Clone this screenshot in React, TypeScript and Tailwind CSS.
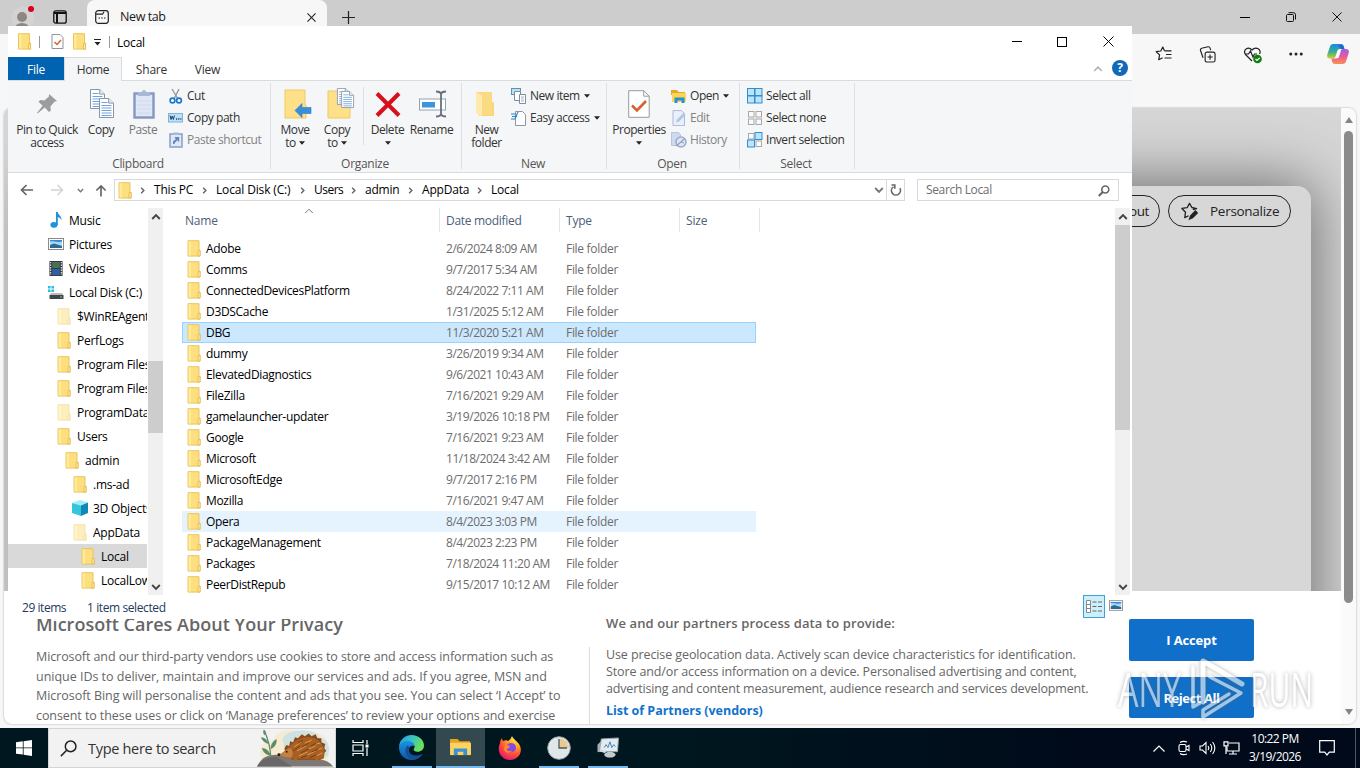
import React from "react";
import { Ellipsis } from "lucide-react";

const Folder = ({ faded = false, className = "w-[14px] h-[17px]" }: { faded?: boolean; className?: string }) => (
  <svg viewBox="0 0 14 17" className={`${className} shrink-0 ${faded ? "opacity-50" : ""}`}>
    <path d="M1 .7h11v9.600h1v5.800H1z" fill="#fddf80" stroke="#e8c14f" strokeWidth=".9" />
    <path d="M11 16.100V10.800l2.100-.6v5.900z" fill="#ffe9a8" stroke="#dfb23e" strokeWidth=".7" />
    <path d="M1.500 1.200h2.500v14.500H1.500z" fill="#ffec9f" opacity=".8" />
  </svg>
);

const Caret = () => (
  <svg viewBox="0 0 6 4" className="inline-block h-[4px] w-[6px] shrink-0"><path d="M0 .3h6L3 3.7z" fill="#222" /></svg>
);

const Chev = ({ d, c = "#555", className = "w-[10px] h-[10px]", sw = 1.6 }: { d: "up" | "down" | "right"; c?: string; className?: string; sw?: number }) => (
  <svg viewBox="0 0 10 10" className={`${className} shrink-0`} fill="none" stroke={c} strokeWidth={sw}>
    <path d={d === "up" ? "M1.2 7 5 3.2 8.8 7" : d === "down" ? "M1.2 3 5 6.8 8.8 3" : "M3.5 2 6.5 5 3.5 8"} />
  </svg>
);

const PageLines = ({ x, y }: { x: number; y: number }) => (
  <g transform={`translate(${x} ${y})`}>
    <path d="M.5.5h9.2l4.8 4.6v14.4H.5z" fill="#fff" stroke="#8795a8" />
    <path d="M9.7.5v4.6h4.8" fill="#e9eef5" stroke="#8795a8" />
    <path d="M2.5 4.5h6M2.5 7.5h10M2.5 10h10M2.5 12.5h10M2.5 15h10M2.5 17.5h10" stroke="#6ea3e0" />
  </g>
);

const Big = ({ icon, a, b, w, caret = false, dim = false }: { icon: React.ReactNode; a: string; b?: string; w: string; caret?: boolean; dim?: boolean }) => (
  <div className={`flex ${w} shrink-0 flex-col items-center`}>
    <div className="mt-[7px] flex h-[32px] items-center justify-center">{icon}</div>
    <div className={`mt-[3px] whitespace-nowrap text-center leading-[13px] ${dim ? "text-[#777]" : "text-[#333]"}`}>
      <div>{a}</div>
      <div className="flex items-center justify-center gap-[3px] leading-[13px]">
        {b && <span>{b}</span>}
        {caret && <span className="flex h-[13px] items-center"><Caret /></span>}
      </div>
    </div>
  </div>
);

const Small = ({ icon, t, caret = false, dim = false }: { icon: React.ReactNode; t: string; caret?: boolean; dim?: boolean }) => (
  <div className={`flex h-[22px] items-center whitespace-nowrap ${dim ? "text-[#838383]" : "text-[#333]"}`}>
    <span className="mr-[3px] flex w-[16px] shrink-0 justify-center">{icon}</span>
    <span>{t}</span>
    {caret && <span className="ml-[4px] flex"><Caret /></span>}
  </div>
);

const Group = ({ w, label, children }: { w: string; label: string; children: React.ReactNode }) => (
  <div className={`flex ${w} shrink-0 flex-col`}>
    <div className="flex h-[74px]">{children}</div>
    <div className="pr-[2px] text-center leading-[17px] tracking-[-0.3px] text-[#555]">{label}</div>
  </div>
);

const Sep = () => <div className="mt-[2px] h-[86px] w-px shrink-0 bg-[#dcdfe3]" />;

const Sq = ({ x, y, on }: { x: number; y: number; on: boolean }) => (
  <rect x={x} y={y} width={on ? 7 : 5.5} height={on ? 7 : 5.5} fill={on ? "#bfe3fb" : "#fafafa"} stroke={on ? "#2f8fd0" : "#a8a8a8"} />
);

function Ribbon() {
  return (
    <div className="flex h-[93px] border-t border-b border-[#dadbdc] bg-[#f5f6f7] tracking-[-0.45px]">
      <Group w="w-[262px]" label="Clipboard">
        <Big w="w-[78px]" a="Pin to Quick" b="access" icon={
          <svg viewBox="0 0 24 24" className="h-[24px] w-[24px]"><path d="M14 2l8 7-2.6.8-4 4.6.4 4-1.8 1.6-4.2-4.4L2.5 21.5 2 21l5.6-7.2L3.500 9.700l1.800-1.600 4.200.300 4.400-4z" fill="#9a9da0" /></svg>} />
        <Big w="w-[30px]" a="Copy" icon={<svg viewBox="0 0 26 30" className="ml-[2px] h-[30px] w-[26px]"><PageLines x={1} y={0} /><PageLines x={10} y={9} /></svg>} />
        <Big w="w-[54px]" a="Paste" dim icon={
          <svg viewBox="0 0 22 30" className="ml-[2px] h-[30px] w-[22px]"><rect x="1.500" y="4.500" width="19" height="24" fill="#dfe7f4" stroke="#8298c0" strokeWidth="2.400" /><path d="M5 3h4a2 2 0 0 1 4 0h4v4H5z" fill="#a9b8d3" /><path d="M4 12h14M4 16h14M4 20h14M4 24h14" stroke="#cbd8ee" /></svg>} />
        <div className="-ml-[2px] flex flex-col pt-[4px]">
          <Small t="Cut" icon={<svg viewBox="0 0 14 16" className="h-[16px] w-[14px]" fill="none"><path d="M3 1l6 10M10 1L5 11" stroke="#8d99a6" strokeWidth="1.400" /><circle cx="3.500" cy="12.500" r="2.400" stroke="#1979c9" strokeWidth="1.600" /><circle cx="10" cy="12.500" r="2.400" stroke="#1979c9" strokeWidth="1.600" /></svg>} />
          <Small t="Copy path" icon={<svg viewBox="0 0 16 10" className="h-[10px] w-[16px]"><rect x=".5" y=".5" width="14" height="8.500" fill="#bfdff7" stroke="#7db4dc" /><path d="M2 2.500l1 4 1.200-3.500L5.400 6.500l1-4" fill="none" stroke="#17456e" /><path d="M8 6h1.200M10.200 6h1.200M12.400 6h1" stroke="#17456e" strokeWidth="1.400" /></svg>} />
          <Small dim t="Paste shortcut" icon={<svg viewBox="0 0 14 16" className="h-[16px] w-[14px]"><rect x="1" y="2" width="12" height="13" fill="#dfe8f6" stroke="#8ea3c7" strokeWidth="1.600" /><path d="M4 .5h6v2.500H4z" fill="#a8b8d6" /><path d="M4 12V9.500l3.500-3H5.800V5h4.400v4.400H8.800V7.800L5.600 11v1z" fill="#5f83bd" /></svg>} />
        </div>
      </Group>
      <Sep />
      <Group w="w-[190px]" label="Organize">
        <Big w="w-[48px]" a="Move" b="to" caret icon={
          <svg viewBox="0 0 28 30" className="ml-[6px] h-[30px] w-[28px]"><path d="M1 1h20v15h1v13H1z" fill="#ffe08a" stroke="#eec961" /><path d="M11 21.500l7-7v4h9v6h-9v4z" fill="#3a8fd9" stroke="#2b78bf" strokeWidth=".6" /></svg>} />
        <Big w="w-[36px]" a="Copy" b="to" caret icon={
          <svg viewBox="0 0 28 32" className="ml-[8px] h-[32px] w-[28px]"><path d="M1 3h20v14h2v13H1z" fill="#ffe08a" stroke="#eec961" /><g transform="translate(10 0) scale(.85)"><PageLines x={0} y={0} /><PageLines x={5} y={3.500} /></g></svg>} />
        <div className="ml-[8px] mt-[6px] h-[58px] w-px bg-[#dcdfe3]" />
        <Big w="w-[47px]" a="Delete" caret icon={
          <svg viewBox="0 0 26 26" className="h-[26px] w-[26px]"><path d="M2 2.500L24 24.500M24 2.500L2 24.500" stroke="#d8101c" strokeWidth="4" /></svg>} />
        <Big w="w-[41px]" a="Rename" icon={
          <svg viewBox="0 0 28 28" className="ml-[3px] h-[28px] w-[28px]" fill="none"><rect x=".5" y="9" width="26" height="11" fill="#fff" stroke="#8da2b8" /><rect x="3" y="12" width="13" height="5.500" fill="#3f93dc" /><path d="M22 2v24M17 1.500q4 0 5 2 1-2 5-2M17 26.500q4 0 5-2 1 2 5 2" stroke="#66717d" strokeWidth="1.800" /></svg>} />
      </Group>
      <Sep />
      <Group w="w-[144px]" label="New">
        <Big w="w-[49px]" a="New" b="folder" icon={
          <svg viewBox="0 0 20 26" className="mr-[4px] h-[26px] w-[20px]"><path d="M1 1h16v10h2v14H4z" fill="#f9d679" /><path d="M1 1l6 3v21.500L1 22z" fill="#ffe9ac" /><path d="M1 1h9l7 1v22H7V4z" fill="#fadb83" /></svg>} />
        <div className="flex flex-col pt-[4px]">
          <Small caret t="New item" icon={<svg viewBox="0 0 16 16" className="h-[16px] w-[16px]"><rect x=".5" y=".5" width="9" height="6" fill="#bfe0f3" stroke="#5b93b6" /><path d="M3.500 3.500h6v9h-6z" fill="#fff" stroke="#7f8e9c" /><path d="M8.500 6.500h6v9h-6z" fill="#fff" stroke="#7f8e9c" /><path d="M10 9h3M10 11h3M10 13h3" stroke="#9fb6cc" /></svg>} />
          <Small caret t="Easy access" icon={<svg viewBox="0 0 16 16" className="h-[16px] w-[16px]" fill="none"><path d="M4.500 1.500h7l3 3v11h-10z" fill="#fff" stroke="#8d98a3" /><path d="M0 4h5M1 6.500h5M4 9L7 2M0 9h4" stroke="#2a83c9" strokeWidth="1.100" /></svg>} />
        </div>
      </Group>
      <Sep />
      <Group w="w-[132px]" label="Open">
        <Big w="w-[64px]" a="Properties" caret icon={
          <svg viewBox="0 0 22 28" className="h-[28px] w-[22px]"><path d="M.7.7h15l5.500 5.500v21.100H.7z" fill="#fff" stroke="#9a9a9a" /><path d="M15.700.7v5.500h5.500" fill="none" stroke="#9a9a9a" /><path d="M4 15.500l5 5 9-9.500" fill="none" stroke="#d8602b" strokeWidth="2.600" /></svg>} />
        <div className="flex flex-col pt-[4px]">
          <Small caret t="Open" icon={<svg viewBox="0 0 16 14" className="h-[14px] w-[16px]"><path d="M0 1h6l1.500 2H14v3H0z" fill="#e9a820" /><path d="M1 4h14v9H1z" fill="#fbd45d" /><path d="M3.500 14V8.500h10V14h-3v-2.500h-4V14z" fill="#2b90d0" /></svg>} />
          <Small dim t="Edit" icon={<svg viewBox="0 0 14 16" className="h-[16px] w-[14px]"><path d="M1 .6h8.500l3 3v12H1z" fill="#eaf0fa" stroke="#a9b9d8" /><path d="M4 12.500l1-3 6.500-6.500 2 2L7 11.500z" fill="#b3c3e2" /></svg>} />
          <Small dim t="History" icon={<svg viewBox="0 0 16 16" className="h-[16px] w-[16px]"><path d="M.5.5h7l2 2v11h-9z" fill="#cfdaee" stroke="#b5c4df" /><circle cx="10" cy="10" r="5" fill="#dfe6f2" stroke="#9aabc9" strokeWidth="1.500" /><path d="M5 14l5-4 3-3M10 10l3 1" stroke="#8fa2c4" strokeWidth="1.300" fill="none" /></svg>} />
        </div>
      </Group>
      <Sep />
      <Group w="w-[114px]" label="Select">
        <div className="flex flex-col pl-[7px] pt-[4px]">
          <Small t="Select all" icon={<svg viewBox="0 0 16 16" className="h-[16px] w-[16px]"><Sq x={0.5} y={0.5} on /><Sq x={8} y={0.5} on /><Sq x={0.5} y={8} on /><Sq x={8} y={8} on /></svg>} />
          <Small t="Select none" icon={<svg viewBox="0 0 16 16" className="h-[16px] w-[16px]"><Sq x={1.500} y={1.500} on={false} /><Sq x={9} y={1.500} on={false} /><Sq x={1.500} y={9} on={false} /><Sq x={9} y={9} on={false} /></svg>} />
          <Small t="Invert selection" icon={<svg viewBox="0 0 16 16" className="h-[16px] w-[16px]"><Sq x={1.500} y={1.500} on={false} /><Sq x={8} y={0.5} on /><Sq x={0.5} y={8} on /><Sq x={9} y={9} on={false} /></svg>} />
        </div>
      </Group>
      <Sep />
    </div>
  );
}

const Crumb = ({ t, w }: { t: string; w: string }) => (
  <>
    <span className="flex w-[23px] shrink-0 items-center justify-center"><Chev d="right" c="#666" className="h-[9px] w-[9px]" /></span>
    <span className={`${w} shrink-0 whitespace-nowrap`}>{t}</span>
  </>
);

function AddressBar() {
  return (
    <div className="flex h-[34px] items-center">
      <div className="ml-[12px] flex w-[94px] items-center text-[#666]">
        <svg viewBox="0 0 14 12" className="h-[12px] w-[14px]" fill="none" stroke="#666" strokeWidth="1.700"><path d="M13 6H1.500M6.500 1l-5 5 5 5" /></svg>
        <svg viewBox="0 0 14 12" className="ml-[16px] h-[12px] w-[14px]" fill="none" stroke="#d4d4d4" strokeWidth="1.500"><path d="M1 6h11.500M7.500 1l5 5-5 5" /></svg>
        <span className="ml-[13px] flex"><Chev d="down" c="#777" className="h-[7px] w-[7px]" sw={2} /></span>
        <svg viewBox="0 0 12 14" className="ml-[11px] h-[13px] w-[12px]" fill="none" stroke="#666" strokeWidth="1.800"><path d="M6 13.500V2M1 7l5-5 5 5" /></svg>
      </div>
      <div className="flex h-[22px] w-[791px] items-center border border-[#d9d9d9] text-black">
        <Folder className="-mr-[1px] ml-[3px] h-[17px] w-[14px]" />
        <Crumb t="This PC" w="w-[39px]" />
        <Crumb t="Local Disk (C:)" w="w-[75px] tracking-[-0.15px]" />
        <Crumb t="Users" w="w-[28px] tracking-[-0.5px]" />
        <Crumb t="admin" w="w-[34px]" />
        <Crumb t="AppData" w="w-[46px]" />
        <Crumb t="Local" w="w-[30px]" />
        <span className="ml-auto mr-[2px] flex"><Chev d="down" c="#777" className="h-[10px] w-[10px]" sw={1.900} /></span>
        <span className="flex h-[20px] w-[18px] items-center justify-center border-l border-[#d9d9d9]">
          <svg viewBox="0 0 12 12" className="h-[12px] w-[12px]" fill="none" stroke="#666" strokeWidth="1.600"><path d="M9.800 4.200A4.500 4.500 0 1 1 3.400 2.800M1.500 1h3.300v3.800" /></svg>
        </span>
      </div>
      <div className="ml-[12px] flex h-[22px] w-[202px] items-center justify-between border border-[#d9d9d9] pl-[8px] pr-[8px] text-[#6d6d6d]">
        <span className="tracking-[-0.35px]">Search Local</span>
        <svg viewBox="0 0 12 12" className="mt-px h-[12px] w-[12px]" fill="none" stroke="#666" strokeWidth="1.600"><circle cx="7.300" cy="4.500" r="3.500" /><path d="M4.800 7L.8 11" strokeWidth="2" /></svg>
      </div>
    </div>
  );
}

const MusicIcon = () => <svg viewBox="0 0 12 16" className="h-[16px] w-[16px]"><ellipse cx="4" cy="12.800" rx="3.600" ry="2.900" fill="#1f92dc" /><path d="M6 0h1.800c.2 3 4.200 4 3.700 8.500-.5-2-2-3-3.700-3.300V13H6z" fill="#1f92dc" /></svg>;
const PicIcon = ({ className = "h-[12px] w-[16px]" }: { className?: string }) => <svg viewBox="0 0 16 12" className={className}><rect x=".5" y=".5" width="15" height="11" fill="#fff" stroke="#8a8a8a" /><rect x="2" y="2" width="12" height="8" fill="#a5d8f5" /><path d="M2 7l4-1.500 8 2.500v2H2z" fill="#2f6b90" /><path d="M2 3.500c4-1 5 1.500 12 0V2H2z" fill="#3b86d6" /></svg>;
const VidIcon = () => <svg viewBox="0 0 14 16" className="h-[15px] w-[14px]"><rect width="14" height="16" fill="#333b42" /><rect x="3" y="1" width="8" height="6.500" fill="#4a7050" /><rect x="3" y="8.500" width="8" height="6.500" fill="#2f5fa8" /><path d="M1.300 1v14M12.700 1v14" stroke="#e6e6e6" strokeWidth="1.200" strokeDasharray="1.500 1.200" /></svg>;
const DiskIcon = () => <svg viewBox="0 0 16 13" className="h-[13px] w-[16px]"><path d="M0 0h2.600v2.600H0zM3.400 0H6v2.600H3.400zM0 3.400h2.600V6H0zM3.400 3.400H6V6H3.400z" fill="#2cbde3" /><path d="M3 7h11l1.500 2.500h-14z" fill="#b8bcc0" /><rect x="1.500" y="9" width="14" height="4" rx=".6" fill="#3f464c" /><rect x="12" y="10.500" width="2" height="1" fill="#6fd66f" /></svg>;
const CubeIcon = () => <svg viewBox="0 0 16 16" className="h-[16px] w-[16px]"><path d="M0 3l8-3 8 2.500-7 3z" fill="#9ff0f6" /><path d="M0 3l9 2.500V16l-9-3z" fill="#35c6dd" /><path d="M9 5.500l7-3v10.500L9 16z" fill="#0f87b8" /></svg>;

type Nav = [string, string, React.ReactNode, boolean?];
const nav: Nav[] = [
  ["pl-[40px]", "Music", <MusicIcon />],
  ["pl-[40px]", "Pictures", <PicIcon />],
  ["pl-[40px]", "Videos", <VidIcon />],
  ["pl-[40px]", "Local Disk (C:)", <DiskIcon />],
  ["pl-[48px]", "$WinREAgent", <Folder faded />],
  ["pl-[48px]", "PerfLogs", <Folder />],
  ["pl-[48px]", "Program Files", <Folder />],
  ["pl-[48px]", "Program Files", <Folder />],
  ["pl-[48px]", "ProgramData", <Folder faded />],
  ["pl-[48px]", "Users", <Folder />],
  ["pl-[56px]", "admin", <Folder />],
  ["pl-[64px]", ".ms-ad", <Folder />],
  ["pl-[64px]", "3D Objects", <CubeIcon />],
  ["pl-[64px]", "AppData", <Folder faded />],
  ["pl-[72px]", "Local", <Folder />, true],
  ["pl-[72px]", "LocalLow", <Folder />],
];

const files: [string, string][] = [
  ["Adobe", "2/6/2024 8:09 AM"],
  ["Comms", "9/7/2017 5:34 AM"],
  ["ConnectedDevicesPlatform", "8/24/2022 7:11 AM"],
  ["D3DSCache", "1/31/2025 5:12 AM"],
  ["DBG", "11/3/2020 5:21 AM"],
  ["dummy", "3/26/2019 9:34 AM"],
  ["ElevatedDiagnostics", "9/6/2021 10:43 AM"],
  ["FileZilla", "7/16/2021 9:29 AM"],
  ["gamelauncher-updater", "3/19/2026 10:18 PM"],
  ["Google", "7/16/2021 9:23 AM"],
  ["Microsoft", "11/18/2024 3:42 AM"],
  ["MicrosoftEdge", "9/7/2017 2:16 PM"],
  ["Mozilla", "7/16/2021 9:47 AM"],
  ["Opera", "8/4/2023 3:03 PM"],
  ["PackageManagement", "8/4/2023 2:23 PM"],
  ["Packages", "7/18/2024 11:20 AM"],
  ["PeerDistRepub", "9/15/2017 10:12 AM"],
];

function Explorer() {
  return (
    <div className="absolute left-[8px] top-[26px] flex h-[593px] w-[1124px] flex-col bg-white text-[12px] tracking-[-0.2px]">
      <div className="flex h-[31px] items-center">
        <Folder className="ml-[9px] h-[17px] w-[15px]" />
        <div className="ml-[7px] h-[12px] w-px bg-[#999]" />
        <svg viewBox="0 0 12 15" className="ml-[11px] h-[15px] w-[13px]" fill="none"><path d="M.5.500h8l3 3v11H.5z" fill="#fff" stroke="#8d949b" /><path d="M3 8l2.500 2.500L9.500 6" stroke="#d8602b" strokeWidth="1.500" /></svg>
        <Folder className="ml-[8px] h-[17px] w-[15px]" />
        <svg viewBox="0 0 7 7" className="ml-[7px] mt-[2px] h-[7px] w-[7px]"><path d="M0 .5h7" stroke="#222" /><path d="M.5 3h6L3.500 6.500z" fill="#222" /></svg>
        <div className="ml-[8px] h-[12px] w-px bg-[#999]" />
        <span className="ml-[7px] pt-[2px] text-black">Local</span>
        <div className="ml-auto flex items-center pr-[18px]">
          <div className="h-px w-[10px] bg-black" />
          <div className="ml-[35px] h-[10px] w-[10px] border border-black" />
          <svg viewBox="0 0 11 11" className="-mt-px ml-[36px] h-[11px] w-[11px]" stroke="#000"><path d="M.5.5l10 10M10.500.5l-10 10" /></svg>
        </div>
      </div>
      <div className="flex h-[23px] items-stretch leading-[25px] text-[#333]">
        <div className="w-[56px] bg-[#0063b1] text-center text-white">File</div>
        <div className="z-10 -mb-px w-[58px] border-x border-t border-[#dadbdc] bg-[#f5f6f7] text-center leading-[23px] tracking-[-0.4px]">Home</div>
        <div className="w-[59px] text-center">Share</div>
        <div className="w-[53px] text-center">View</div>
        <div className="ml-auto flex items-center pr-[4px]">
          <Chev d="up" c="#b0b0b0" />
          <span className="-mt-px ml-[9px] h-[16px] w-[16px] rounded-full bg-[#0f69b8] text-center text-[12px] font-bold leading-[16px] text-white">?</span>
        </div>
      </div>
      <Ribbon />
      <AddressBar />
      <div className="flex h-[388px] overflow-hidden pt-px">
        <div className="w-[139px] shrink-0 overflow-hidden">
          {nav.map(([pad, t, icon, sel], i) => (
            <div key={i} className={`flex h-[24px] items-center gap-[5px] whitespace-nowrap text-black ${pad} ${sel ? "bg-[#d9d9d9]" : ""}`}>
              <span className="flex w-[16px] shrink-0 justify-center">{icon}</span>
              <span className="pt-px tracking-[-0.25px]">{t}</span>
            </div>
          ))}
        </div>
        <div className="ml-px flex w-[15px] shrink-0 flex-col items-center bg-[#f0f0f0] pt-[4px] pb-[3px]">
          <Chev d="up" c="#444" sw={1.900} />
          <div className="mt-[139px] h-[72px] w-full bg-[#cdcdcd]" />
          <span className="mt-auto flex"><Chev d="down" c="#444" sw={1.900} /></span>
        </div>
        <div className="ml-[20px] flex w-[920px] flex-col">
          <div className="flex h-[26px] items-center text-[#4c607a]">
            <div className="relative flex h-full w-[257px] items-center border-r border-[#e5e5e5] pl-[2px] pt-px">
              <span>Name</span>
              <span className="absolute left-[121px] top-[-2px]"><Chev d="up" c="#777" sw={1} /></span>
            </div>
            <div className="flex h-full w-[120px] items-center border-r border-[#e5e5e5] pl-[6px] pt-px tracking-[-0.3px]">Date modified</div>
            <div className="flex h-full w-[120px] items-center border-r border-[#e5e5e5] pl-[6px] pt-px">Type</div>
            <div className="flex h-full w-[80px] items-center border-r border-[#e5e5e5] pl-[6px] pt-px">Size</div>
          </div>
          <div className="-ml-px mt-[6px]">
            {files.map(([n, d]) => (
              <div key={n} className={`flex h-[21px] w-[574px] shrink-0 items-center whitespace-nowrap ${n === "DBG" ? "bg-[#cce8ff] outline outline-1 -outline-offset-1 outline-[#99d1ff]" : n === "Opera" ? "bg-[#e5f3ff]" : ""}`}>
                <span className="ml-[5px] flex w-[19px]"><Folder /></span>
                <span className="w-[240px] tracking-[-0.32px] text-black">{n}</span>
                <span className="w-[120px] tracking-[-0.45px] text-[#6d6d6d]">{d}</span>
                <span className="tracking-[-0.3px] text-[#6d6d6d]">File folder</span>
              </div>
            ))}
          </div>
        </div>
        <div className="ml-auto mr-[2px] flex w-[15px] shrink-0 flex-col items-center bg-[#f0f0f0] pt-[4px] pb-[3px]">
          <Chev d="up" c="#444" sw={1.900} />
          <div className="mt-[3px] h-[205px] w-full bg-[#cdcdcd]" />
          <span className="mt-auto flex"><Chev d="down" c="#444" sw={1.900} /></span>
        </div>
      </div>
      <div className="flex h-[24px] items-start text-[#1e395b]">
        <span className="ml-[14px] w-[65px] pt-[4px] tracking-[-0.45px]">29 items</span>
        <span className="pt-[4px] tracking-[-0.4px]">1 item selected</span>
        <div className="ml-auto flex h-[23px] w-[22px] items-center justify-center border border-[#3fa3d8] bg-[#cdeefb]">
          <svg viewBox="0 0 16 14" className="h-[14px] w-[16px]" fill="none"><path d="M.5.5h4v12h-4zM.5 4.500h4M.5 8.500h4" stroke="#888" fill="#fff" /><path d="M6.500 2h4M12 2h4M6.500 6.500h4M12 6.500h4M6.500 11h4M12 11h4" stroke="#666" /></svg>
        </div>
        <PicIcon className="ml-[4px] mr-[9px] mt-[5px] h-[11px] w-[14px]" />
      </div>
    </div>
  );
}

function Browser() {
  return (
    <div className="flex h-[728px] w-full flex-col bg-[#f7f7f7]">
      <div className="flex h-[34px] items-center bg-[#cdcdcd]">
        <svg viewBox="0 0 24 28" className="ml-[11px] mt-[6px] h-[28px] w-[24px]"><circle cx="12" cy="12" r="11.500" fill="#d3d3d3" /><circle cx="11" cy="11" r="5" fill="#8c8783" /><path d="M3 24a8 7 0 0 1 16 0z" fill="#8c8783" /><circle cx="20" cy="3" r="3" fill="#d5001c" /></svg>
        <svg viewBox="0 0 14 14" className="ml-[18px] h-[14px] w-[14px]" fill="none" stroke="#111" strokeWidth="1.300"><rect x=".8" y=".8" width="12.400" height="12.400" rx="2" /><path d="M1 3h12M4 3v10" strokeWidth="2" /></svg>
        <div className="ml-[20px] flex h-full w-[240px] items-center rounded-t-[8px] bg-[#f7f7f7] text-[12.5px] text-[#1a1a1a]">
          <svg viewBox="0 0 14 14" className="ml-[8px] h-[14px] w-[14px]" fill="none" stroke="#222" strokeWidth="1.200"><rect x=".7" y=".7" width="12.600" height="12.600" rx="2.500" /><path d="M1 4.200h6.500l1.500-2.500M3.500 8h1.500M6.200 8h1.500M9 8h1.500" /></svg>
          <span className="ml-[11px] tracking-[-0.4px]">New tab</span>
          <svg viewBox="0 0 10 10" className="ml-auto mr-[11px] h-[9px] w-[9px]" stroke="#222" strokeWidth="1.200"><path d="M.5.5l9 9M9.500.5l-9 9" /></svg>
        </div>
        <svg viewBox="0 0 14 14" className="ml-[15px] h-[13px] w-[13px]" stroke="#222" strokeWidth="1.300"><path d="M7 0v14M0 7h14" /></svg>
        <div className="ml-auto flex items-center pr-[18px]">
          <div className="h-px w-[10px] bg-black" />
          <svg viewBox="0 0 10 10" className="ml-[36px] h-[10px] w-[10px]" fill="none" stroke="#111"><rect x=".5" y="2.500" width="7" height="7" rx="1" /><path d="M2.500.7h5a2 2 0 0 1 2 2V7.500" /></svg>
          <svg viewBox="0 0 11 11" className="ml-[36px] h-[10px] w-[10px]" stroke="#000"><path d="M.5.5l10 10M10.500.5l-10 10" /></svg>
        </div>
      </div>
      <div className="flex h-[74px] justify-end pr-[11px] pt-[9px]">
        <svg viewBox="0 0 18 18" className="mr-[26px] mt-[2px] h-[18px] w-[18px]" fill="none" stroke="#222" strokeWidth="1.200"><path d="M9.500 5.800L7.800 2 5.800 6 1.200 6.700l3.400 3.200-.9 4.800 4-2M9.500 5.800h7M11 9.500h5.500M9.500 13h7" strokeLinejoin="round" /></svg>
        <svg viewBox="0 0 18 18" className="mr-[27px] mt-[3px] h-[17px] w-[17px]" fill="none" stroke="#222" strokeWidth="1.200"><rect x="6.500" y="6.500" width="10.500" height="10.500" rx="2" /><path d="M11.700 9v5.500M9 11.700h5.500M4.300 12.500l-2.700-7.700a2 2 0 0 1 1.300-2.400L9.500.8a2 2 0 0 1 2.300 1.400l.5 2.300" /></svg>
        <svg viewBox="0 0 20 18" className="mr-[24px] mt-[3px] h-[18px] w-[20px]" fill="none" stroke="#222" strokeWidth="1.200"><path d="M9 15L2.500 8.500C-.5 4 5 0 9 4c4-4 10-.5 7.500 4" /><path d="M2 8h3.500l2-3 2.500 6 1.500-3H14" /><circle cx="14.500" cy="13" r="4.300" fill="#107c10" stroke="none" /><path d="M12.500 13l1.500 1.500 2.700-2.700" stroke="#fff" /></svg>
        <Ellipsis size={18} strokeWidth={2} className="mr-[22px] mt-[2px] text-[#222]" />
        <svg viewBox="0 0 22 20" className="mt-px h-[20px] w-[22px]">
          <defs>
            <linearGradient id="cpA" x1="0" y1="0" x2="0" y2="1"><stop offset="0" stopColor="#1d86e8" /><stop offset=".55" stopColor="#35b18e" /><stop offset="1" stopColor="#d6cf2c" /></linearGradient>
            <linearGradient id="cpB" x1="0" y1="0" x2="0" y2="1"><stop offset="0" stopColor="#a35bea" /><stop offset=".5" stopColor="#e9599a" /><stop offset="1" stopColor="#fb9150" /></linearGradient>
          </defs>
          <path d="M6 0h8c2 0 2.500 1 3 3l.6 2H13c-2 0-2.500 1-3 3l-1.500 4.500C8 14 7 14.500 5.500 14.500H3c-2.500 0-3.300-1.500-2.700-4L3 2.500C3.500 1 4.500 0 6 0z" fill="url(#cpA)" />
          <path d="M16 20H8c-2 0-2.500-1-3-3l-.6-2.500H9c2 0 2.500-1 3-3L13.500 7c.5-1.500 1.500-2 3-2H19c2.500 0 3.300 1.500 2.700 4L19 17.500c-.5 1.500-1.500 2.500-3 2.500z" fill="url(#cpB)" />
          <path d="M11 1h3c2 0 2.500 1 3 3l.4 1H14z" fill="#2465c9" />
          <path d="M8.500 14L11 6.500h3L11.500 14z" fill="#fff" opacity=".9" />
        </svg>
      </div>
      <div className="mx-[4px] flex h-[616px] overflow-hidden rounded-[8px] bg-white shadow-[0_0_2px_#999]">
        <div className="flex w-[1337px] shrink-0 flex-col">
          <div className="h-[483px] overflow-hidden bg-[#d6d6d6] pt-[78px]">
            <div className="ml-[30px] flex h-[500px] w-[1277px] justify-end gap-[8px] rounded-t-[14px] bg-[#d7d7d7] pr-[20px] pt-[9px] text-[13.5px] text-[#222] shadow-[0_0_60px_4px_#6d6d6d]">
              <div className="flex h-[32px] w-[120px] items-center justify-end rounded-full border border-[#222] pr-[10px] tracking-[-0.4px]">Layout</div>
              <div className="flex h-[32px] w-[123px] items-center rounded-full border border-[#222] pl-[11px] tracking-[-0.28px]">
                <svg viewBox="0 0 20 20" className="h-[19px] w-[19px]" fill="none" stroke="#222" strokeWidth="1.400"><path d="M13.500 8l4-1-5-1.200L10 1.500 7.500 6 2 6.800l3.800 4L5 16.500l4-2" strokeLinejoin="round" /><path d="M10 18l1.200-3.500 5-5 2 2-5 5z" fill="#222" /></svg>
                <span className="ml-[11px]">Personalize</span>
              </div>
            </div>
          </div>
          <div className="flex h-[133px] text-[#666]">
            <div className="ml-[32px] w-[554px] shrink-0 pt-[20px]">
              <div className="whitespace-nowrap text-[18px] font-semibold leading-[26px] tracking-[0.02px]">Microsoft Cares About Your Privacy</div>
              <div className="mt-[10px] h-[80px] whitespace-nowrap border-r border-[#ddd] text-[12.5px] leading-[19.600px]">
                <div className="tracking-[-0.09px]">Microsoft and our third-party vendors use cookies to store and access information such as</div>
                <div className="tracking-[-0.02px]">unique IDs to deliver, maintain and improve our services and ads. If you agree, MSN and</div>
                <div className="tracking-[-0.05px]">Microsoft Bing will personalise the content and ads that you see. You can select ‘I Accept’ to</div>
                <div className="tracking-[-0.08px]">consent to these uses or click on ‘Manage preferences’ to review your options and exercise</div>
              </div>
            </div>
            <div className="ml-[16px] w-[523px] shrink-0 whitespace-nowrap pt-[23px] text-[12.5px] tracking-[-0.1px]">
              <div className="text-[13px] font-semibold leading-[18px] tracking-[0.11px]">We and our partners process data to provide:</div>
              <div className="mt-[14px] leading-[17px]">
                <div>Use precise geolocation data. Actively scan device characteristics for identification.</div>
                <div className="tracking-[-0.13px]">Store and/or access information on a device. Personalised advertising and content,</div>
                <div className="tracking-[-0.16px]">advertising and content measurement, audience research and services development.</div>
              </div>
              <div className="mt-[5px] font-bold leading-[17px] tracking-[-0.03px] text-[#1272cc]">List of Partners (vendors)</div>
            </div>
            <div className="flex w-[125px] flex-col gap-[16px] pt-[28px] text-[13px] font-bold tracking-[-0.15px] text-white">
              <div className="flex h-[42px] items-center justify-center rounded-[2px] bg-[#1070c9] pt-px">I Accept</div>
              <div className="flex h-[41px] items-center justify-center rounded-[2px] bg-[#1070c9] pt-[2px] tracking-[-0.45px]">Reject All</div>
            </div>
          </div>
        </div>
        <div className="flex w-[15px] flex-col items-center bg-[#fafafa] pb-[9px] pt-[9px]">
          <svg viewBox="0 0 8 6" className="h-[6px] w-[8px]"><path d="M0 6h8L4 0z" fill="#858585" /></svg>
          <div className="mt-[8px] h-[472px] w-[9px] rounded-full bg-[#8b8b8b]" />
          <svg viewBox="0 0 8 6" className="mt-auto h-[6px] w-[8px]"><path d="M0 0h8L4 6z" fill="#858585" /></svg>
        </div>
      </div>
    </div>
  );
}

function Watermark() {
  return (
    <svg viewBox="0 0 200 70" className="absolute left-[1116px] top-[654px] h-[70px] w-[200px] opacity-60 drop-shadow-[0_0_2px_rgba(90,90,90,0.8)]" fill="#fff">
      <text x="2" y="53" fontFamily="Open Sans, sans-serif" fontSize="48" textLength="63" lengthAdjust="spacingAndGlyphs">ANY</text>
      <text x="134" y="53" fontFamily="Open Sans, sans-serif" fontSize="48" textLength="63" lengthAdjust="spacingAndGlyphs">RUN</text>
      <path d="M87 48V7L126 30" fill="none" stroke="#fff" strokeWidth="5" strokeLinecap="round" strokeLinejoin="round" />
      <path d="M77 53V13M77 53L84 49M94 23L125 39L87 63V56L113 40" fill="none" stroke="#fff" strokeWidth="3.500" strokeLinecap="round" strokeLinejoin="round" />
    </svg>
  );
}

const Task = ({ children, active = false, line = "w-[40px] bg-[#76b9ed]" }: { children: React.ReactNode; active?: boolean; line?: string }) => (
  <div className={`flex h-[40px] w-[49px] shrink-0 flex-col items-center ${active ? "bg-[#33484f]" : ""}`}>
    <div className="flex h-[38px] items-center justify-center pt-px">{children}</div>
    <div className={`h-[2px] ${line}`} />
  </div>
);

function Taskbar() {
  return (
    <div className="flex h-[40px] w-full items-center bg-linear-to-r from-[#00171f] from-50% to-[#000a1a] to-80% text-white">
      <div className="flex w-[48px] justify-center">
        <svg viewBox="0 0 16 16" className="h-[16px] w-[16px]" fill="#fff"><path d="M0 2.300L6.800 1.300v6.200H0zM7.600 1.200L16 0v7.500H7.600zM0 8.300h6.800v6.300L0 13.700zM7.600 8.300H16V16l-8.400-1.200z" /></svg>
      </div>
      <div className="flex h-[40px] w-[288px] items-center border border-[#d5d5d5] bg-[#f2f2f2] text-[#333]">
        <svg viewBox="0 0 16 16" className="ml-[11px] h-[17px] w-[17px]" fill="none" stroke="#222" strokeWidth="1.400"><circle cx="10" cy="6" r="5" /><path d="M6.300 9.700L.8 15.200" /></svg>
        <span className="ml-[11px] whitespace-nowrap pt-px text-[14.5px] tracking-[-0.3px]">Type here to search</span>
        <svg viewBox="0 0 80 38" className="ml-auto h-[38px] w-[78px]">
          <path d="M8 36C-2 22 4 12 16 12 20-2 40-2 48 6c14-8 26 2 24 14 4 8 0 12-2 16z" fill="#f5ead2" />
          <path d="M26 10C30-2 60-2 64 8c10 2 12 12 8 20H30z" fill="#cfe2e2" />
          <path d="M0 38c6-12 14-12 22-12 12 4 24 4 36 4 8 0 16 2 20 8z" fill="#7d7876" />
          <path d="M0 38c6-10 14-9 20-10l16 10z" fill="#6a6768" />
          <path d="M14 28C14 20 12 12 8 2" fill="none" stroke="#5f8a68" strokeWidth="1.300" strokeLinecap="round" />
          <path d="M14 20c0-5 3-9 6-10 1 4-2 9-6 10zM12 15C8 14 5 11 4 8c4 0 7 3 8 7zM14 27c-5-1-8-4-9-8 4 0 8 3 9 8zM8 6C6 4 6 2 7 0c2 1 2 4 1 6z" fill="#5f8a68" />
          <path d="M28 20l2-4 3 1 1-5 3 1 2-5 3 1 4-4 3 2 4-3 3 3 4-2 2 4 4 0 0 4 4 2-1 4 2 3-3 3 1 4-4 2H36z" fill="#8c4817" />
          <path d="M22 26c6-2 7-6 12-9C40 8 54 5 61 10c8 5 10 13 7 20H36c-4 0-8-2-14-4z" fill="#a85f22" />
          <path d="M22 26c5-1 8-6 12-7 4 4 3 7 1 10-4 0-8-1-13-3z" fill="#c5803f" />
          <circle cx="22.500" cy="26" r="1.500" fill="#222" /><circle cx="30.500" cy="22.800" r="1" fill="#222" />
          <path d="M38 18l7-5M41 22l9-5M43 27l9-4M52 26l8-4M53 20l7-3M49 14l7-3M60 15l5-1M61 27l6-3M62 21l5-2" stroke="#dc9d5c" strokeWidth="1" />
          <path d="M37 22l7-5M45 24l8-4M46 18l7-4M55 17l6-3M56 23l7-3M54 29l7-3M42 14l5-3M45 29l6-2" stroke="#6f3813" strokeWidth=".9" />
          <path d="M38 29v3h3v-3M60 29v3h3v-3" fill="#a8672c" />
        </svg>
      </div>
      <div className="flex w-[51px] shrink-0 justify-center">
        <svg viewBox="0 0 17 16" className="mr-[3px] h-[16px] w-[17px]" fill="none" stroke="#fff" strokeWidth="1.200"><path d="M1 0v2.500h10V0M1 16v-2.500h10V16M1 5h10v6H1zM15 0v4M15 8v8" /><path d="M13.500 4.500h3v3h-3z" fill="#fff" stroke="none" /></svg>
      </div>
      <Task>
        <svg viewBox="0 0 24 24" className="h-[25px] w-[25px]">
          <defs>
            <linearGradient id="eg1" x1="0" y1="0" x2="1" y2=".4"><stop offset="0" stopColor="#1c9de0" /><stop offset=".5" stopColor="#35c1c9" /><stop offset="1" stopColor="#6be05a" /></linearGradient>
            <linearGradient id="eg2" x1="0" y1="0" x2="0" y2="1"><stop offset="0" stopColor="#1b94e4" /><stop offset="1" stopColor="#0f56a8" /></linearGradient>
          </defs>
          <path d="M0 11C1 4 6 0 12 0c7 0 12 5 12 10 0 4-3 6-6 6s-4-1-4-2 1-1.500 1-3c0-2-2-4-5-4-4 0-8 1.500-10 4z" fill="url(#eg1)" />
          <path d="M0 12c.5-4 4-6.500 8-6.500 4 0 7 2.500 7 5.500-1-1-3-1-4.500.5C8 14 10 20 16 20c3 0 5-1 6.500-2-2 4-6 6-10.500 6C5 24 0 18.500 0 12z" fill="url(#eg2)" />
          <path d="M8 10c-3 3-3 11 6 13.900 4-.3 7-3 8.500-5.900-2 1.300-4 2-6.500 2-6 0-8.500-6-5.500-8.500z" fill="#124f96" />
        </svg>
      </Task>
      <Task active line="w-[49px] bg-[#76b9ed]">
        <svg viewBox="0 0 24 20" className="h-[19px] w-[23px]"><path d="M1 1h8l2 2.500h11V8H1z" fill="#e9a21c" /><path d="M1 5h22v13H1z" fill="#fdd463" /><path d="M5 18v-7h14v7h-4v-3.500H9V18z" fill="#3a92d6" /></svg>
      </Task>
      <Task line="w-[40px]">
        <svg viewBox="0 0 24 24" className="h-[24px] w-[24px]">
          <defs>
            <radialGradient id="ff1" cx=".75" cy=".1" r="1"><stop offset="0" stopColor="#fff04e" /><stop offset=".35" stopColor="#ffa51f" /><stop offset=".7" stopColor="#ff4a3b" /><stop offset="1" stopColor="#e2127b" /></radialGradient>
          </defs>
          <path d="M2 7c0-2 1-4 2-5 0 1.500.5 2.500 1.500 3L8 4l2 1c2-1 3-3 4-5 1 3 5 5 7 8 5 8-1 16-9 16S-2 16 2 7z" fill="url(#ff1)" />
          <path d="M8 10c2-2 3-3 5-3 4 0 5 3 5 5 0 3-3 4.500-5.500 4.500C9 16.500 7 13 8 10z" fill="#8a48e0" />
          <path d="M7 9.500c2-.5 4 0 5 1-1 2-3 1.500-3.500 3 1 2 4 2 5.500 1-1 3-7 3-8-1z" fill="#ff8a24" />
        </svg>
      </Task>
      <Task>
        <svg viewBox="0 0 24 24" className="h-[24px] w-[24px]"><circle cx="12" cy="12" r="11.300" fill="#dfe7ea" stroke="#98a3a8" /><path d="M12 12V2a10 10 0 0 1 10 10z" fill="#e8c994" /><circle cx="12" cy="12" r="9.500" fill="none" stroke="#fff" strokeDasharray="1 4" /><path d="M12 3v9h8" fill="none" stroke="#4f5a60" strokeWidth="1.300" /></svg>
      </Task>
      <Task>
        <svg viewBox="0 0 24 22" className="h-[21px] w-[24px]"><path d="M1 8l5-5v12l-5 1z" fill="#a5afb5" /><path d="M5 2l18-1-1 14.500L3 15z" fill="#e4ebef" stroke="#98a3ab" /><path d="M8 11l2-3 2 3 2-6 2 6 2-3 2 2" fill="none" stroke="#3b80bb" /><ellipse cx="14" cy="18.500" rx="6" ry="3" fill="#c3cbd0" /><path d="M4 12l6 3-1 2-6-2z" fill="#d5dbdf" /></svg>
      </Task>
      <div className="ml-auto flex h-full items-center">
        <svg viewBox="0 0 12 7" className="h-[7px] w-[12px]" fill="none" stroke="#fff" strokeWidth="1.200"><path d="M.5 6.500L6 1l5.500 5.500" /></svg>
        <svg viewBox="0 0 12 16" className="ml-[13px] h-[16px] w-[12px]" fill="none" stroke="#fff" strokeWidth="1.100"><rect x="1" y="4.500" width="7" height="7" rx="1.500" /><path d="M8 7l3-1.500v5L8 9M2 2.500Q5 .5 9 2M2 13.500q3 2 7 .5" /></svg>
        <svg viewBox="0 0 17 14" className="ml-[9px] h-[14px] w-[17px]" fill="none" stroke="#fff" strokeWidth="1.100"><path d="M1 5h2.500L7 1.500v11L3.500 9H1zM9 5q1.500 2 0 4M11.300 3q3 4 0 8M13.600 1q4.500 6 0 12" /></svg>
        <svg viewBox="0 0 17 14" className="ml-[7px] h-[14px] w-[17px]" fill="none" stroke="#fff" strokeWidth="1.200"><path d="M6 2h10v8H4V6M10 10v3M6 13h8" /><path d="M1 .8h4v4H1zM3 5v8" /></svg>
        <div className="ml-[4px] w-[62px] whitespace-nowrap text-center text-[12px] leading-[18px] tracking-[-0.55px]">10:22 PM<br />3/19/2026</div>
        <svg viewBox="0 0 16 16" className="ml-[13px] h-[16px] w-[16px]" fill="none" stroke="#fff" strokeWidth="1.200"><path d="M.7.7h14.600v11.500h-5L8 15l-2.300-2.800h-5z" /></svg>
        <div className="ml-[20px] mr-[4px] h-[40px] w-px bg-[#4c5660]" />
      </div>
    </div>
  );
}

export default function App() {
  return (
    <div className="relative h-[768px] w-[1360px] overflow-hidden font-['Open_Sans','Noto_Sans',sans-serif]">
      <Browser />
      <Taskbar />
      <Explorer />
      <Watermark />
    </div>
  );
}
